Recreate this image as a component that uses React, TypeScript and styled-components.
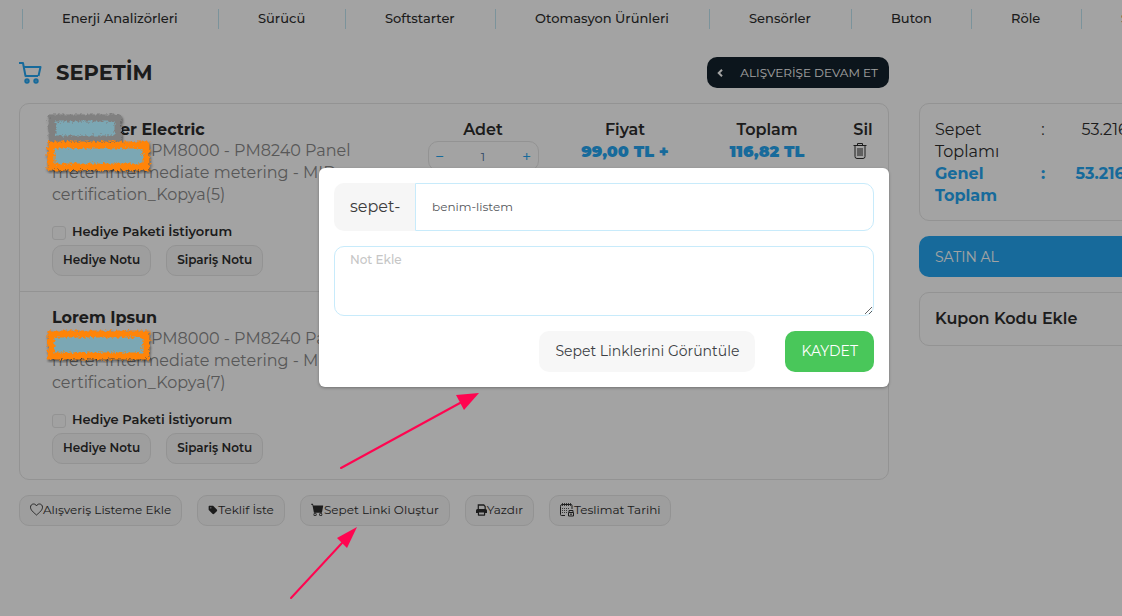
import React from 'react';
import styled, { createGlobalStyle, css } from 'styled-components';
import { FaTag } from 'react-icons/fa6';
import { BsCartFill } from 'react-icons/bs';

const GlobalStyle = createGlobalStyle`
  *, *::before, *::after { box-sizing: border-box; }
  html, body { margin: 0; padding: 0; background: #fff; }
  body, button, input, textarea { font-family: Montserrat, Inter, "Liberation Sans", sans-serif; }
  body { color: #2d2d2d; font-size: 16px; line-height: 22px; overflow-x: hidden; }
  button { cursor: pointer; }
`;

const line = '#e6e6e6';
const blue = '#25a7f2';

const Clip = styled.div`
  overflow: hidden;
`;

const Shell = styled.div`
  position: relative;
  min-width: 1208px;
  min-height: 100vh;
  padding: 9px 19px 40px;
`;

const Container = styled.div`
  max-width: 1170px;
  margin: 0 auto;
`;

const Nav = styled.nav`
  display: grid;
  grid-template-columns: 196px 127px 150px 214px 142px 120px 110px 110px;
  margin-left: 3px;
`;

const NavLink = styled.a`
  height: 20px;
  padding-left: 39px;
  border-left: 1px solid #c0e6f2;
  color: #2d2d2d;
  font-size: 13px;
  font-weight: 500;
  line-height: 18px;
  text-decoration: none;
  white-space: nowrap;
`;

const Columns = styled.div`
  display: grid;
  grid-template-columns: minmax(0, 1fr) 270px;
  gap: 15px 30px;
  margin-top: 28px;
  align-items: start;
`;

const Heading = styled.header`
  display: flex;
  align-items: center;
  justify-content: space-between;
  height: 31px;
`;

const Title = styled.h1`
  display: flex;
  align-items: center;
  gap: 13px;
  margin: 0;
  font-size: 21px;
  font-weight: 700;
  line-height: 30px;

  svg { color: ${blue}; }
`;

const ContinueLink = styled.a`
  display: flex;
  align-items: center;
  justify-content: space-between;
  width: 182px;
  height: 31px;
  padding: 0 11px 0 10px;
  border-radius: 10px;
  background: #13212c;
  color: #fff;
  font-size: 12px;
  text-decoration: none;
  white-space: nowrap;
`;

const Card = styled.section`
  border: 1px solid ${line};
  border-radius: 10px;
`;

const Row = styled.article`
  display: grid;
  grid-template-columns: minmax(0, 1fr) repeat(3, 142px) 50px;
  padding: 15px 0 15px 32px;

  & + & { border-top: 1px solid ${line}; }
`;

const Product = styled.div`
  display: flex;
  flex-direction: column;
  padding-right: 30px;
`;

const Brand = styled.h2`
  height: 21px;
  margin: 0;
  font-size: 16px;
  font-weight: 700;
  line-height: 22px;
`;

const Name = styled.p`
  margin: 0 0 13px;
  color: #8a8a8a;
  line-height: 22px;
`;

const Gap = styled.span<{ $width: number }>`
  display: inline-block;
  width: ${p => p.$width}px;
`;

const Check = styled.label`
  display: flex;
  align-items: center;
  gap: 6px;
  height: 24px;
  margin-bottom: 2px;
  font-size: 13px;
  font-weight: 600;

  input {
    appearance: none;
    width: 14px;
    height: 14px;
    margin: 3px 0 0;
    border: 1px solid ${line};
    border-radius: 3px;
    background: #fcfcfc;
  }
`;

const Buttons = styled.div`
  display: flex;
  gap: 15px;
`;

const PillButton = styled.button<{ $strong?: boolean }>`
  display: flex;
  align-items: center;
  height: 31px;
  padding: 0 10px 2px;
  border: 1px solid ${line};
  border-radius: 10px;
  background: #f7f7f7;
  color: #2d2d2d;
  font-size: 12px;
  font-weight: ${p => (p.$strong ? 600 : 400)};
  white-space: nowrap;

  svg { flex: none; }
`;

const Cell = styled.div`
  display: flex;
  flex-direction: column;
  align-items: center;
  text-align: center;
`;

const CellHead = styled.span`
  font-weight: 600;
`;

const Price = styled.span`
  color: ${blue};
  font-weight: 900;
`;

const Quantity = styled.div`
  display: flex;
  align-items: center;
  width: 111px;
  height: 30px;
  border: 1px solid ${line};
  border-radius: 10px;

  button {
    width: 22px;
    padding: 0;
    border: 0;
    background: none;
    color: ${blue};
    font-size: 16px;
  }

  input {
    flex: 1;
    min-width: 0;
    padding: 0;
    border: 0;
    background: none;
    color: #4b6f9b;
    font-size: 12px;
    text-align: center;
  }
`;

const IconButton = styled.button`
  display: flex;
  align-self: flex-start;
  margin-left: 15px;
  padding: 1px 0;
  border: 0;
  background: none;
  color: #2d2d2d;
`;

const Side = styled.aside`
  display: flex;
  flex-direction: column;
  gap: 15px;
`;

const Summary = styled(Card)`
  padding: 15px 15px 13px;
`;

const SummaryRow = styled.div<{ $total?: boolean }>`
  display: grid;
  grid-template-columns: 92px 32px minmax(0, 1fr);
  line-height: 22px;
  ${p => p.$total && css`color: ${blue}; font-weight: 700;`}

  span:nth-child(2) { text-align: center; }
  span:nth-child(3) { text-align: right; }
`;

const BuyButton = styled.button`
  height: 41px;
  padding: 0 16px;
  border: 0;
  border-radius: 10px;
  background: ${blue};
  color: #fff;
  font-size: 14px;
  text-align: left;
`;

const Coupon = styled(Card)`
  padding: 15px;
  font-weight: 600;
`;

const Backdrop = styled.div`
  position: absolute;
  inset: 0;
  display: flex;
  align-items: flex-start;
  justify-content: center;
  padding-top: 168px;
  background: rgba(0, 0, 0, 0.36);
`;

const Dialog = styled.form`
  display: flex;
  flex-direction: column;
  gap: 15px;
  width: 570px;
  padding: 15px;
  border-radius: 6px;
  background: #fff;
  box-shadow: 0 1px 3px rgba(0, 0, 0, 0.3);
`;

const InputGroup = styled.label`
  display: flex;
  height: 48px;
`;

const Prefix = styled.span`
  display: flex;
  align-items: center;
  padding-left: 16px;
  width: 81px;
  border-radius: 10px 0 0 10px;
  background: #f6f6f6;
  color: #3c3c3c;
`;

const TextInput = styled.input`
  flex: 1;
  min-width: 0;
  padding: 0 16px 2px;
  border: 1px solid #c8ebfb;
  border-radius: 0 10px 10px 0;
  color: #55585c;
  font-size: 12px;
`;

const Note = styled.textarea`
  display: block;
  height: 70px;
  padding: 5px 15px;
  border: 1px solid #c8ebfb;
  border-radius: 10px;
  font-size: 12px;
  font-weight: 500;
  line-height: 16px;
  resize: both;

  &::placeholder { color: #c6c6c6; }
`;

const Actions = styled.div`
  display: flex;
  justify-content: flex-end;
  gap: 30px;
`;

const ActionButton = styled.button<{ $save?: boolean }>`
  height: 41px;
  padding: 0 16px 1px;
  border: 0;
  border-radius: 10px;
  background: ${p => (p.$save ? '#49c75a' : '#f7f7f7')};
  color: ${p => (p.$save ? '#fff' : '#3c3f44')};
  font-size: 14px;
`;

const Marks = styled.svg`
  position: absolute;
  top: 0;
  left: calc(50% - 604px);
  width: 1208px;
  height: 616px;
  pointer-events: none;
`;

const CartIcon = () => (
  <svg width="24" height="24" viewBox="0 0 24 24" fill="none" stroke="currentColor" strokeWidth="2" strokeLinejoin="round" aria-hidden="true">
    <path d="M0 2h4l2.500 13h12.500M4.800 6H21.500l-2 9" />
    <circle cx="8" cy="20" r="1.600" strokeWidth="2.200" />
    <circle cx="17" cy="20" r="1.600" strokeWidth="2.200" />
  </svg>
);

const ChevronIcon = () => (
  <svg width="6" height="8" viewBox="0 0 6 8" fill="none" stroke="currentColor" strokeWidth="2" aria-hidden="true">
    <path d="M5 .7 1.700 4 5 7.300" />
  </svg>
);

const TrashIcon = () => (
  <svg width="14" height="17" viewBox="0 0 14 17" fill="none" stroke="currentColor" aria-hidden="true">
    <path d="M.5 3.500h13M4.500 3.500v-2h5v2M2 3.500v11q0 2 2 2h6q2 0 2-2v-11M5 6v8M7 6v8M9 6v8" />
  </svg>
);

const HeartIcon = () => (
  <svg width="13" height="13" viewBox="0 0 13 13" fill="none" stroke="currentColor" strokeWidth=".9" aria-hidden="true">
    <path d="M6.500 12C3.500 9.500.5 7 .5 4.200.5 2.300 1.900 1 3.600 1c1.300 0 2.300.7 2.900 1.900C7.100 1.700 8.100 1 9.400 1c1.700 0 3.100 1.300 3.100 3.200C12.500 7 9.500 9.500 6.500 12z" />
  </svg>
);

const PrintIcon = () => (
  <svg width="11" height="12" viewBox="0 0 12 12" preserveAspectRatio="none" aria-hidden="true">
    <path d="M2.500 5V1h6l1.500 1.500V5" fill="none" stroke="currentColor" strokeWidth="1.300" />
    <path d="M1.500 5h9Q12 5 12 6.500V9h-2v2q0 .7-.7.700H2.700Q2 11.700 2 11V9H0V6.500Q0 5 1.500 5zM3.300 8.500v2h5.400v-2z" fill="currentColor" fillRule="evenodd" />
  </svg>
);

const CalendarIcon = () => (
  <svg width="14" height="14" viewBox="0 0 14 14" fill="none" stroke="currentColor" aria-hidden="true">
    <path d="M5 12.500H1.500Q.5 12.500.5 11.500v-8Q.5 1.500 2 1.500h9q1 0 1 1V6" />
    <path d="M2.500 0v3M4.500 0v3M6.500 0v3M8.500 0v3M10.500 0v3" strokeWidth=".8" />
    <path d="M2 5.500h8M2 7.500h5M2 9.500h5" strokeWidth=".8" strokeDasharray="1 1" />
    <path d="M9 9V7.500h4V9M8.500 9.500h5v3.500h-5zM10 11.200h2" />
  </svg>
);

const links = ['Enerji Analizörleri', 'Sürücü', 'Softstarter', 'Otomasyon Ürünleri', 'Sensörler', 'Buton', 'Röle', 'Sigorta'];

type Item = { id: number; brand: React.ReactNode; copy: number };

const items: Item[] = [
  { id: 1, brand: <><Gap $width={68} />er Electric</>, copy: 5 },
  { id: 2, brand: 'Lorem Ipsun', copy: 7 },
];

const BasketRow = ({ item }: { item: Item }) => (
  <Row>
    <Product>
      <Brand>{item.brand}</Brand>
      <Name>
        <Gap $width={99} />PM8000 - PM8240 Panel<br />
        meter intermediate metering - MID<br />
        certification_Kopya({item.copy})
      </Name>
      <Check><input type="checkbox" />Hediye Paketi İstiyorum</Check>
      <Buttons>
        <PillButton type="button" $strong>Hediye Notu</PillButton>
        <PillButton type="button" $strong>Sipariş Notu</PillButton>
      </Buttons>
    </Product>
    <Cell>
      <CellHead>Adet</CellHead>
      <Quantity>
        <button type="button" aria-label="Azalt">−</button>
        <input aria-label="Adet" defaultValue="1" />
        <button type="button" aria-label="Artır">+</button>
      </Quantity>
    </Cell>
    <Cell>
      <CellHead>Fiyat</CellHead>
      <Price>99,00 TL +<br />%18 KDV</Price>
    </Cell>
    <Cell>
      <CellHead>Toplam</CellHead>
      <Price>116,82 TL</Price>
    </Cell>
    <Cell>
      <CellHead>Sil</CellHead>
      <IconButton type="button" aria-label="Sil"><TrashIcon /></IconButton>
    </Cell>
  </Row>
);

const orangeBlots = [142, 331];

export default function App() {
  return (
    <Clip>
      <GlobalStyle />
      <Shell>
        <Container>
          <Nav>
            {links.map(text => <NavLink key={text} href="#">{text}</NavLink>)}
          </Nav>
          <Columns>
            <Heading>
              <Title><CartIcon />SEPETİM</Title>
              <ContinueLink href="#"><ChevronIcon />ALIŞVERİŞE DEVAM ET</ContinueLink>
            </Heading>
            <span />
            <Card>
              {items.map(item => <BasketRow key={item.id} item={item} />)}
            </Card>
            <Side>
              <Summary>
                <SummaryRow><span>Sepet Toplamı</span><span>:</span><span>53.216,36 TL</span></SummaryRow>
                <SummaryRow $total><span>Genel Toplam</span><span>:</span><span>53.216,36 TL</span></SummaryRow>
              </Summary>
              <BuyButton type="button">SATIN AL</BuyButton>
              <Coupon>Kupon Kodu Ekle</Coupon>
            </Side>
            <Buttons>
              <PillButton type="button"><HeartIcon />Alışveriş Listeme Ekle</PillButton>
              <PillButton type="button"><FaTag size={10} />Teklif İste</PillButton>
              <PillButton type="button"><BsCartFill size={13} />Sepet Linki Oluştur</PillButton>
              <PillButton type="button"><PrintIcon />Yazdır</PillButton>
              <PillButton type="button"><CalendarIcon />Teslimat Tarihi</PillButton>
            </Buttons>
          </Columns>
        </Container>
        <Backdrop>
          <Dialog role="dialog" aria-label="Sepet Linki Oluştur" onSubmit={e => e.preventDefault()}>
            <InputGroup>
              <Prefix>sepet-</Prefix>
              <TextInput defaultValue="benim-listem" />
            </InputGroup>
            <Note placeholder="Not Ekle" aria-label="Not Ekle" />
            <Actions>
              <ActionButton type="button">Sepet Linklerini Görüntüle</ActionButton>
              <ActionButton type="submit" $save>KAYDET</ActionButton>
            </Actions>
          </Dialog>
        </Backdrop>
        <Marks viewBox="0 0 1208 616" aria-hidden="true">
          <defs>
            <filter id="rough" x="-10%" y="-20%" width="120%" height="150%" colorInterpolationFilters="sRGB">
              <feTurbulence type="fractalNoise" baseFrequency="0.4" numOctaves="2" seed="4" result="noise" />
              <feDisplacementMap in="SourceGraphic" in2="noise" scale="6" xChannelSelector="R" yChannelSelector="G" result="edge" />
              <feDropShadow in="edge" dx="1" dy="2" stdDeviation="1" floodOpacity="0.45" />
            </filter>
          </defs>
          <g filter="url(#rough)">
            <rect x="52" y="118" width="66" height="21" fill="#7ba7b4" stroke="#808080" strokeWidth="7" />
          </g>
          {orangeBlots.map(y => (
            <g key={y} filter="url(#rough)">
              <rect x="51" y={y + 3} width="95" height="22" fill="#7ba7b4" stroke="#ff8408" strokeWidth="7" />
            </g>
          ))}
          <g stroke="#ff0550" strokeWidth="2" fill="#ff0550" strokeLinecap="round">
            <path d="M341 468 460 403" />
            <path d="M479 393 464 410 456 395z" stroke="none" />
            <path d="M291 598 342 543" />
            <path d="M357 527 347 548 337 538z" stroke="none" />
          </g>
        </Marks>
      </Shell>
    </Clip>
  );
}
